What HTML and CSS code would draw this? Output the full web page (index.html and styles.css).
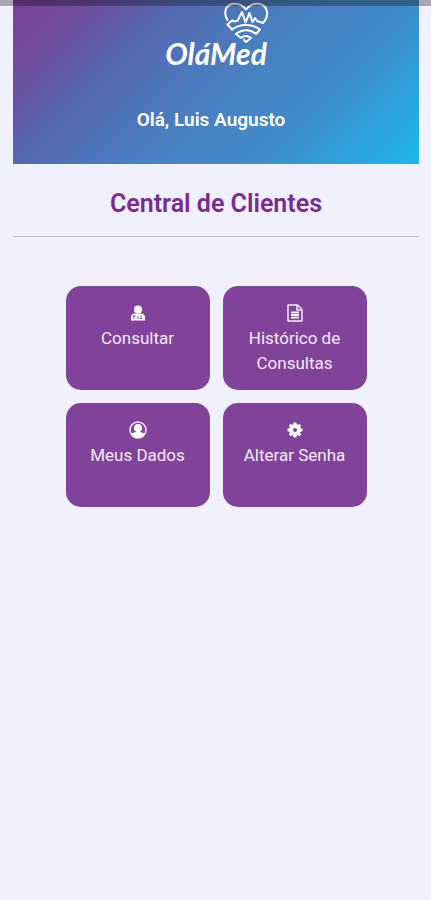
FILE: index.html
```
<!DOCTYPE html>
<html lang="pt-BR">
<head>
<meta charset="utf-8">
<meta name="viewport" content="width=device-width, initial-scale=1">
<title>OláMed</title>
<link rel="stylesheet" href="styles.css">
</head>
<body>
<div class="status-shade"></div>
<div class="page">
  <header class="hero">
    <div class="brand">
      <svg class="brand-heart" viewBox="0 0 46 42" aria-hidden="true">
        <path d="M4.500 18C0 11 2.500 3 10 1.800c6-.8 10 1.700 13 5.700 3-4 7-6.500 13-5.700 7.500 1.200 10.500 9.200 6 16.700l-2 2.500-6-2"/>
        <path d="M9 27.500 4.500 22.500 9 18.500c2 1 3.500 1 5.500.3L19 10l3.500 10.500L26.500 11l3 9 2.500-4 2 3"/>
        <path d="M9 27.500c8-6 20-6 28 0L33 32c-6-5-14-5-20 0"/>
        <path d="M13 32l5 4c3-2.500 7-2.500 10 0l-5 4-2-2"/>
      </svg>
      <span class="brand-name">OláMed</span>
    </div>
    <p class="greeting">Olá, Luis Augusto</p>
  </header>
  <main>
    <h1 class="title">Central de Clientes</h1>
    <nav class="menu" aria-label="Central de Clientes">
      <button class="tile" type="button">
        <svg class="icon" viewBox="0 0 18 18" aria-hidden="true">
          <circle class="fill" cx="9" cy="5.500" r="4"/>
          <path class="fill" d="M5 9.500h8q3 1 3 4v3H2v-3q0-3 3-4z"/>
          <path class="cut" d="M5 11.500v3M9 12v3M12 11.500v3M6.500 12H4M13 14.500h-2"/>
        </svg>
        <span>Consultar</span>
      </button>
      <button class="tile" type="button">
        <svg class="icon" viewBox="0 0 18 18" aria-hidden="true">
          <path class="line" d="M2 1h9.500L16 5.500V17H2z"/>
          <path class="line" d="M11 1.500V6h4.500"/>
          <path class="fill" d="M5 7.500h8v7H5z"/>
          <path class="cut thin" d="M5 9.500h8M5 12.500h8"/>
        </svg>
        <span>Histórico de Consultas</span>
      </button>
      <button class="tile" type="button">
        <svg class="icon" viewBox="0 0 18 18" aria-hidden="true">
          <circle class="line" cx="9" cy="9" r="8"/>
          <circle class="fill" cx="9" cy="7" r="4"/>
          <path class="fill" d="M7 9h4v2l5 1.500q-2.500 4.500-7 4.500t-7-4.500L7 11z"/>
        </svg>
        <span>Meus Dados</span>
      </button>
      <button class="tile" type="button">
        <svg class="icon" viewBox="0 0 18 18" aria-hidden="true">
          <circle class="gear-ring" cx="9" cy="9" r="4"/>
          <path class="gear-teeth" d="M9 4V1.500M9 14v2.500M4 9H1.500M14 9h2.500M5.500 5.500 3.800 3.800M12.500 5.500l1.700-1.700M5.500 12.500l-1.700 1.700M12.500 12.500l1.700 1.700"/>
        </svg>
        <span>Alterar Senha</span>
      </button>
    </nav>
  </main>
</div>
</body>
</html>
```
FILE: styles.css
```
* {
  box-sizing: border-box;
}

body {
  margin: 0;
  min-height: 100vh;
  background: #f0f0ff;
  font-family: Roboto, "Liberation Sans", sans-serif;
}

/* Translucent system bar over the top of the page */
.status-shade {
  position: fixed;
  inset: 0 0 auto;
  height: 6px;
  background: rgba(0, 0, 0, 0.3);
}

.page {
  padding: 0 12px 0 13px;
}

.hero {
  display: flex;
  flex-direction: column;
  align-items: center;
  padding: 2px 0 32px;
  background: linear-gradient(135deg, #7b4397 0%, #724b9d 12%, #5369b3 30%, #4a7ec1 50%, #3f8dcb 72%, #20b2e9 97%);
  color: #fff;
}

.brand {
  display: flex;
  flex-direction: column;
  align-items: flex-end;
}

.brand-heart {
  width: 46px;
  height: 42px;
  margin-right: -2px;
  fill: none;
  stroke: #fff;
  stroke-width: 2;
  stroke-linecap: round;
  stroke-linejoin: round;
}

.brand-name {
  font: italic 700 30px/28px Lato, sans-serif;
  margin-top: -5px;
}

.greeting {
  margin: 41px 0 0;
  padding-right: 10px;
  font-size: 19px;
  font-weight: 600;
  line-height: 24px;
}

.title {
  margin: 0;
  padding: 25px 0 17px;
  border-bottom: 1px solid #bcbcd0;
  color: #782b90;
  font-size: 25px;
  font-weight: 600;
  line-height: 30px;
  text-align: center;
}

.menu {
  display: grid;
  grid-template-columns: repeat(2, 144px);
  grid-auto-rows: 104px;
  justify-content: center;
  gap: 13px;
  margin-top: 49px;
}

.tile {
  display: flex;
  flex-direction: column;
  align-items: center;
  padding: 18px 16px 0;
  border: 0;
  border-radius: 15px;
  background: #804399;
  color: #f6eafa;
  font: 400 17px/25px Roboto, "Liberation Sans", sans-serif;
  cursor: pointer;
}

.icon {
  flex: none;
  width: 18px;
  height: 18px;
  margin-bottom: 4px;
  fill: none;
}

.fill {
  fill: #fff;
}

.line {
  stroke: #f6eafa;
  stroke-width: 1.5;
  stroke-linejoin: round;
}

.cut {
  stroke: #804399;
  stroke-width: 1;
}

.thin {
  stroke-width: 0.7;
}

.gear-ring {
  stroke: #fff;
  stroke-width: 4;
}

.gear-teeth {
  stroke: #fff;
  stroke-width: 3;
}
```
